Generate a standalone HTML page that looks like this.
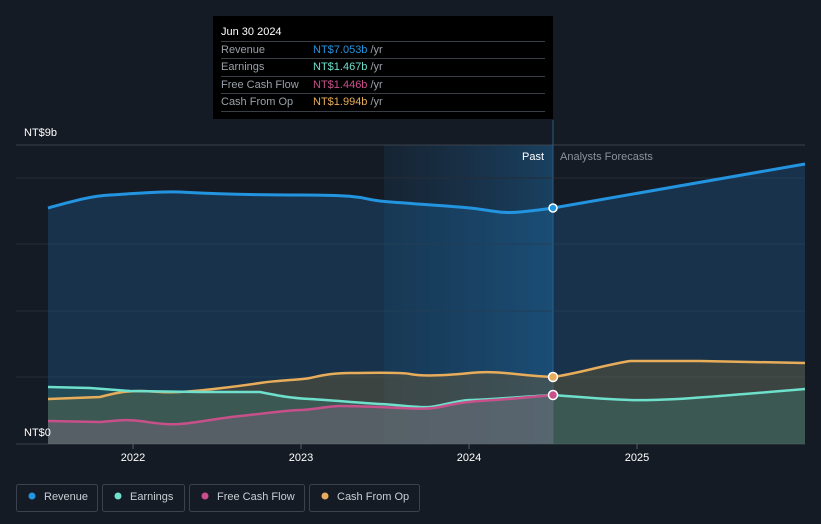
<!DOCTYPE html>
<html><head><meta charset="utf-8"><style>
body{margin:0;background:#151b24;width:821px;height:524px;overflow:hidden;font-family:"Liberation Sans",sans-serif}
svg{display:block}
text{font-family:"Liberation Sans",sans-serif}
</style></head><body>
<svg width="821" height="524" viewBox="0 0 821 524">
<defs>
<linearGradient id="past" x1="0" x2="1" y1="0" y2="0">
<stop offset="0" stop-color="#1a3a58" stop-opacity="0.3"/><stop offset="1" stop-color="#1a4a70" stop-opacity="0.8"/>
</linearGradient>
</defs>
<rect width="821" height="524" fill="#151b24"/>
<rect x="384" y="145" width="169" height="299" fill="url(#past)"/>
<line x1="16" y1="145" x2="805" y2="145" stroke="#3a424d"/>
<line x1="16" y1="178" x2="805" y2="178" stroke="#252c36"/>
<line x1="16" y1="244" x2="805" y2="244" stroke="#252c36"/>
<line x1="16" y1="311" x2="805" y2="311" stroke="#252c36"/>
<line x1="16" y1="377" x2="805" y2="377" stroke="#252c36"/>
<line x1="16" y1="444" x2="805" y2="444" stroke="#3a424d"/>
<line x1="553" y1="120" x2="553" y2="444" stroke="#2a5a80"/>
<!-- revenue area -->
<path d="M48,208 C70,202 90,196 110,195 S160,191 180,192 S230,195 300,195 S360,199 380,201 S450,206 470,208 S500,214 520,212 S540,210 553,208 L805,164 L805,444 L48,444Z" fill="#1c6fae" fill-opacity="0.28"/>
<!-- cash op area -->
<path d="M48,399 L100,397 C115,393 125,391 140,391 S160,393 180,392 S240,386 260,383 S300,380 310,378 S330,373 350,373 S400,372 410,374 S440,376 470,373 S520,376 553,377 C580,373 600,366 630,361 L700,361 L805,363 L805,444 L48,444Z" fill="#6b5a3a" fill-opacity="0.45"/>
<path d="M48,387 L90,388 L130,391 L200,392 L260,392 C280,396 290,398 310,399 S360,403 380,404 S420,408 430,407 S460,400 470,400 S520,397 553,395 C580,397 600,399 630,400 S700,398 805,389 L805,444 L48,444Z" fill="#3a8a78" fill-opacity="0.3"/>
<path d="M48,421 L100,422 C115,421 125,419 140,421 S165,425 180,424 S220,418 240,416 S290,410 300,410 S330,406 340,406 S380,407 400,408 S430,409 440,407 S460,402 480,401 S520,398 553,395 L553,444 L48,444Z" fill="#8a6a8a" fill-opacity="0.35"/>
<!-- lines -->
<path d="M48,208 C70,202 90,196 110,195 S160,191 180,192 S230,195 300,195 S360,199 380,201 S450,206 470,208 S500,214 520,212 S540,210 553,208 L805,164" fill="none" stroke="#2394df" stroke-width="3"/>
<path d="M48,399 L100,397 C115,393 125,391 140,391 S160,393 180,392 S240,386 260,383 S300,380 310,378 S330,373 350,373 S400,372 410,374 S440,376 470,373 S520,376 553,377 C580,373 600,366 630,361 L700,361 L805,363" fill="none" stroke="#e8ad5a" stroke-width="2.5"/>
<path d="M48,387 L90,388 L130,391 L200,392 L260,392 C280,396 290,398 310,399 S360,403 380,404 S420,408 430,407 S460,400 470,400 S520,397 553,395 C580,397 600,399 630,400 S700,398 805,389" fill="none" stroke="#6ee0cc" stroke-width="2.5"/>
<path d="M48,421 L100,422 C115,421 125,419 140,421 S165,425 180,424 S220,418 240,416 S290,410 300,410 S330,406 340,406 S380,407 400,408 S430,409 440,407 S460,402 480,401 S520,398 553,395" fill="none" stroke="#c8508a" stroke-width="2.5"/>
<circle cx="553" cy="208" r="4" fill="#2394df" stroke="#fff" stroke-width="1.5"/>
<circle cx="553" cy="377" r="4.5" fill="#e8ad5a" stroke="#fff" stroke-width="1.5"/>
<circle cx="553" cy="395" r="4.5" fill="#c8508a" stroke="#fff" stroke-width="1.5"/>
<text x="24" y="136" fill="#fff" font-size="11">NT$9b</text>
<text x="24" y="436" fill="#fff" font-size="11">NT$0</text>
<text x="544" y="160" fill="#fff" font-size="11" text-anchor="end">Past</text>
<text x="560" y="160" fill="#8a929c" font-size="11">Analysts Forecasts</text>
<g stroke="#555d68"><line x1="133" y1="444" x2="133" y2="449"/><line x1="301" y1="444" x2="301" y2="449"/><line x1="469" y1="444" x2="469" y2="449"/><line x1="637" y1="444" x2="637" y2="449"/></g>
<g fill="#fff" font-size="11" text-anchor="middle"><text x="133" y="461">2022</text><text x="301" y="461">2023</text><text x="469" y="461">2024</text><text x="637" y="461">2025</text></g>
<!-- tooltip -->
<rect x="213" y="16" width="340" height="103" fill="#000"/>
<text x="221" y="35" fill="#fff" font-size="11">Jun 30 2024</text>
<g stroke="#3a3f46"><line x1="221" y1="41.5" x2="545" y2="41.5"/><line x1="221" y1="58.5" x2="545" y2="58.5"/><line x1="221" y1="76.5" x2="545" y2="76.5"/><line x1="221" y1="93.5" x2="545" y2="93.5"/><line x1="221" y1="111.5" x2="545" y2="111.5"/></g>
<g font-size="11">
<text x="221" y="53" fill="#9aa0a8">Revenue</text><text x="313" y="53" fill="#2394df">NT$7.053b <tspan fill="#9aa0a8">/yr</tspan></text>
<text x="221" y="70" fill="#9aa0a8">Earnings</text><text x="313" y="70" fill="#6ee0cc">NT$1.467b <tspan fill="#9aa0a8">/yr</tspan></text>
<text x="221" y="88" fill="#9aa0a8">Free Cash Flow</text><text x="313" y="88" fill="#c8508a">NT$1.446b <tspan fill="#9aa0a8">/yr</tspan></text>
<text x="221" y="105" fill="#9aa0a8">Cash From Op</text><text x="313" y="105" fill="#e8ad5a">NT$1.994b <tspan fill="#9aa0a8">/yr</tspan></text>
</g>
<!-- legend -->
<g fill="none" stroke="#3a424d">
<rect x="16.5" y="484.5" width="81" height="27" rx="2"/>
<rect x="102.5" y="484.5" width="82" height="27" rx="2"/>
<rect x="189.5" y="484.5" width="115" height="27" rx="2"/>
<rect x="309.5" y="484.5" width="110" height="27" rx="2"/>
</g>
<circle cx="32" cy="496" r="3.5" fill="#2394df"/>
<circle cx="118" cy="496" r="3.5" fill="#6ee0cc"/>
<circle cx="205" cy="496" r="3.5" fill="#c8508a"/>
<circle cx="325" cy="496" r="3.5" fill="#e8ad5a"/>
<g fill="#c9ced4" font-size="11">
<text x="44" y="500">Revenue</text><text x="130" y="500">Earnings</text><text x="217" y="500">Free Cash Flow</text><text x="337" y="500">Cash From Op</text>
</g>
</svg>
</body></html>
